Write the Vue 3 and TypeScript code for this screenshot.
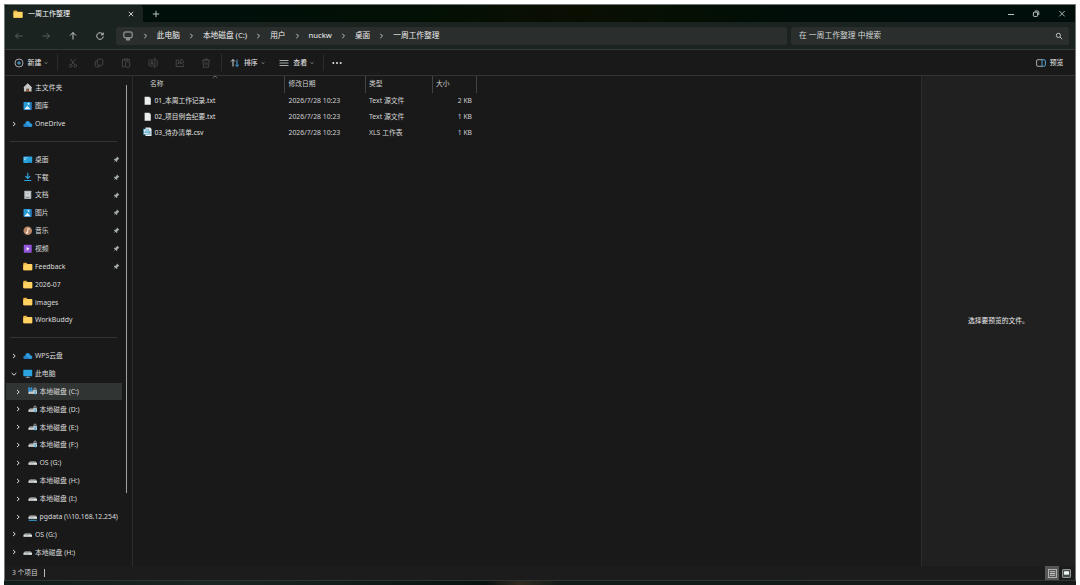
<script setup lang="ts">
interface NavItem {
  label?: string
  icon?: string
  chevron?: 'right' | 'down'
  pinned?: boolean
  nested?: boolean
  selected?: boolean
}

const crumbs: string[] = ['此电脑', '本地磁盘 (C:)', '用户', 'nuckw', '桌面', '一周工作整理']

const nav: NavItem[] = [
  { label: '主文件夹', icon: 'home' },
  { label: '图库', icon: 'gallery' },
  { label: 'OneDrive', icon: 'cloud', chevron: 'right' },
  {},
  { label: '桌面', icon: 'desktop', pinned: true },
  { label: '下载', icon: 'download', pinned: true },
  { label: '文档', icon: 'doc', pinned: true },
  { label: '图片', icon: 'gallery', pinned: true },
  { label: '音乐', icon: 'music', pinned: true },
  { label: '视频', icon: 'video', pinned: true },
  { label: 'Feedback', icon: 'folder', pinned: true },
  { label: '2026-07', icon: 'folder' },
  { label: 'images', icon: 'folder' },
  { label: 'WorkBuddy', icon: 'folder' },
  {},
  { label: 'WPS云盘', icon: 'cloud', chevron: 'right' },
  { label: '此电脑', icon: 'pc', chevron: 'down' },
  { label: '本地磁盘 (C:)', icon: 'sysdisk', chevron: 'right', nested: true, selected: true },
  { label: '本地磁盘 (D:)', icon: 'lockdisk', chevron: 'right', nested: true },
  { label: '本地磁盘 (E:)', icon: 'lockdisk', chevron: 'right', nested: true },
  { label: '本地磁盘 (F:)', icon: 'lockdisk', chevron: 'right', nested: true },
  { label: 'OS (G:)', icon: 'disk', chevron: 'right', nested: true },
  { label: '本地磁盘 (H:)', icon: 'disk', chevron: 'right', nested: true },
  { label: '本地磁盘 (I:)', icon: 'disk', chevron: 'right', nested: true },
  { label: 'pgdata (\\\\10.168.12.254)', icon: 'netdisk', chevron: 'right', nested: true },
  { label: 'OS (G:)', icon: 'disk', chevron: 'right' },
  { label: '本地磁盘 (H:)', icon: 'disk', chevron: 'right' },
]

const files = [
  { name: '01_本周工作记录.txt', date: '2026/7/28 10:23', type: 'Text 源文件', size: '2 KB', csv: false },
  { name: '02_项目例会纪要.txt', date: '2026/7/28 10:23', type: 'Text 源文件', size: '1 KB', csv: false },
  { name: '03_待办清单.csv', date: '2026/7/28 10:23', type: 'XLS 工作表', size: '1 KB', csv: true },
]
</script>

<template>
  <div class="screen">
    <div class="window">
      <header class="titlebar">
        <div class="tab">
          <svg class="i10" viewBox="0 0 10 10"><path d="M.5 1.5h3.200l1 1.200h4.800v6H.5z" fill="#e8a93a" /><path d="M.5 3h9v5.700h-9z" fill="#ffd466" /></svg>
          <span class="tab-title">一周工作整理</span>
          <svg class="tab-x" viewBox="0 0 6 6"><path d="M.8.8l4.400 4.400M5.200.8L.8 5.200" stroke="#ddd" stroke-width=".9" /></svg>
        </div>
        <svg class="plus" viewBox="0 0 8 8"><path d="M4 .8v6.400M.8 4h6.400" stroke="#ccd3cf" stroke-width=".9" /></svg>
        <div class="caption">
          <svg viewBox="0 0 8 8"><path d="M1 4.500h6" stroke="#d5dbd8" stroke-width=".9" /></svg>
          <svg viewBox="0 0 8 8" fill="none" stroke="#d5dbd8" stroke-width=".9"><rect x="1.400" y="2.200" width="4.200" height="4.200" rx=".8" /><path d="M2.800 1h2.700q1.300 0 1.300 1.300v2.600" /></svg>
          <svg viewBox="0 0 8 8"><path d="M1.300 1l5.400 5.400M6.700 1L1.300 6.400" stroke="#d5dbd8" stroke-width=".8" /></svg>
        </div>
      </header>

      <div class="addressbar">
        <div class="arrows">
          <svg class="dim" viewBox="0 0 10 10"><path d="M8.500 5h-7M4.500 2L1.500 5l3 3" /></svg>
          <svg class="dim" viewBox="0 0 10 10"><path d="M1.500 5h7M5.500 2l3 3-3 3" /></svg>
          <svg viewBox="0 0 10 10"><path d="M5 8.500v-7M2 4.500l3-3 3 3" /></svg>
          <svg viewBox="0 0 10 10"><path d="M7.900 3.400A3.300 3.300 0 1 0 8.300 5.500M8.200 1.600v2.200H5.900" /></svg>
        </div>
        <div class="path">
          <svg class="monitor" viewBox="0 0 10 10"><path d="M1.800 1h6.400q.9 0 .9.9v4q0 .9-.9.9H1.800q-.9 0-.9-.9v-4q0-.9.9-.9zM3 8.900h4M4 7v1.700M6 7v1.700" /></svg>
          <template v-for="c in crumbs" :key="c">
            <svg class="sep" viewBox="0 0 23 8"><path d="M10.300 1.800L12.500 4l-2.200 2.200" /></svg>
            <span>{{ c }}</span>
          </template>
        </div>
        <div class="search">
          <span>在 一周工作整理 中搜索</span>
          <svg viewBox="0 0 8 8"><circle cx="3.400" cy="3.400" r="2.100" /><path d="M5 5l2.200 2.200" /></svg>
        </div>
      </div>

      <div class="toolbar">
        <div class="tool new">
          <svg class="i10" viewBox="0 0 10 10" fill="none"><circle cx="5" cy="5" r="4" stroke="#c4ccd0" stroke-width=".8" /><path d="M5 3v4M3 5h4" stroke="#58b4e8" stroke-width=".9" /></svg>
          <span>新建</span>
          <svg class="caret" viewBox="0 0 4 4"><path d="M.5 1.300L2 2.700l1.500-1.400" /></svg>
        </div>
        <i class="bar"></i>
        <div class="disabled">
          <svg viewBox="0 0 10 10"><circle cx="2.700" cy="7.800" r="1.400" /><circle cx="7.300" cy="7.800" r="1.400" /><path d="M2.400.8l4.200 5.900M7.600.8L3.400 6.700" /></svg>
          <svg viewBox="0 0 10 10"><rect x="3.400" y="1.200" width="5.400" height="6" rx="1.200" /><path d="M3.300 3H2.200Q1.200 3 1.200 4v3.500q0 1.300 1.300 1.300H5q1 0 1-1.200" /></svg>
          <svg viewBox="0 0 10 10"><path d="M3.400 1.600H1.500v7.300h2.300M6.600 1.600h1.900v1.500M3.400.9h3.200v1.400H3.400z" /><rect x="4.500" y="3.800" width="4.200" height="5.400" rx=".7" /></svg>
          <svg viewBox="0 0 10 10"><path d="M5.600 2H2Q.8 2 .8 3.200v3.600Q.8 8 2 8h3.600M8 2q1.200 0 1.200 1.200v3.600Q9.200 8 8 8M6.800.7v8.600M5.900.7h1.800M5.900 9.300h1.800M2.300 6.800L3.900 3.200l1.500 3.600M2.800 5.700h2.100" /></svg>
          <svg viewBox="0 0 10 10"><path d="M4 2.200H1.200v6.400h7.400V6.500M6 1l3 2.500L6 6V4.500q-2 0-3 1.700Q3.200 3 6 2.500z" /></svg>
          <svg viewBox="0 0 10 10"><path d="M.9 2.200h8.200M3.700 2V.9h2.600V2M1.900 2.200l.6 7h5l.6-7M4.100 4.200v3M5.900 4.200v3" /></svg>
        </div>
        <i class="bar b2"></i>
        <div class="tool sort">
          <svg class="i10" viewBox="0 0 10 10" fill="none" stroke-width="1"><path d="M3 8.500V1.500M1 3.500l2-2 2 2" stroke="#cfd3d5" /><path d="M7 1.500v7M5.200 6.700L7 8.500l1.900-1.800" stroke="#4ba3df" /></svg>
          <span>排序</span>
          <svg class="caret" viewBox="0 0 4 4"><path d="M.5 1.300L2 2.700l1.500-1.400" /></svg>
        </div>
        <div class="tool view">
          <svg class="i10" viewBox="0 0 10 10"><path d="M.5 2.500h9M.5 5h9M.5 7.500h9" stroke="#b5bbbb" stroke-width=".9" /></svg>
          <span>查看</span>
          <svg class="caret" viewBox="0 0 4 4"><path d="M.5 1.300L2 2.700l1.500-1.400" /></svg>
        </div>
        <i class="bar b3"></i>
        <svg class="more" viewBox="0 0 10 4" fill="#e5e5e5"><circle cx="1.300" cy="2" r="1" /><circle cx="5" cy="2" r="1" /><circle cx="8.700" cy="2" r="1" /></svg>
        <div class="tool preview-btn">
          <svg class="i10" viewBox="0 0 10 10" fill="none" stroke-width=".9"><path d="M6 1.700H2Q.6 1.700.6 3v4Q.6 8.300 2 8.300h4" stroke="#b5bbbb" /><path d="M6 1.700h2q1.400 0 1.400 1.300v4q0 1.300-1.400 1.300H6z" stroke="#5aaee0" /></svg>
          <span>预览</span>
        </div>
      </div>

      <main class="content">
        <nav class="side">
          <div v-for="(n, k) in nav" :key="k" class="row" :class="{ nested: n.nested, selected: n.selected, rule: !n.label }">
            <template v-if="n.label">
              <span class="chev">
                <svg v-if="n.chevron === 'right'" viewBox="0 0 6 6"><path d="M2 .9L4.200 3 2 5.100" /></svg>
                <svg v-else-if="n.chevron" viewBox="0 0 6 6"><path d="M.7 2L3 4.200 5.300 2" /></svg>
              </span>
              <svg class="ico" viewBox="0 0 10 10">
                <template v-if="n.icon === 'home'"><path d="M1 9V4.500L5 .8l4 3.700V9H6.300V6H3.700v3z" fill="#c4c4c2" /><path d="M.7 4.900L5 .8l4.300 4.100" fill="none" stroke="#e4dfdb" stroke-width=".8" /><path d="M4 6.500h2V9H4z" fill="#b5683a" /></template>
                <template v-else-if="n.icon === 'gallery'"><rect x=".7" y="1" width="8.600" height="8.400" rx=".8" fill="#2b74b5" /><path d="M.7 1h7v8H.7z" fill="#259bd8" /><path d="M1.500 8.800L4.600 5l3.300 3.800z" fill="#e9f6fc" /><circle cx="5.800" cy="3" r="1" fill="#fff" /></template>
                <template v-else-if="n.icon === 'cloud'"><path d="M2.500 8.500C-.2 8.200 0 5 2.300 4.900 2.700 1.300 7 1 7.500 4.500 10.500 4.500 10.500 8.500 7.800 8.500z" fill="#2e9bdc" /><path d="M2.500 8.500C-.2 8.200 0 5 2.300 4.900L7.800 8.500z" fill="#247fc4" /></template>
                <template v-else-if="n.icon === 'desktop'"><rect x=".3" y="1.500" width="9.400" height="7" rx=".8" fill="#27a2dd" /><path d="M1.300 3h1.300M1.300 4.800h1.300M3.400 3h1.200" stroke="#d8f2ff" /><path d="M5.500 7.600h3" stroke="#1468a2" /></template>
                <template v-else-if="n.icon === 'download'"><path d="M5 .8v5.900M2.500 4.300L5 6.800l2.500-2.500M1.300 9h7.400" fill="none" stroke="#2fa5df" stroke-width="1.200" /></template>
                <template v-else-if="n.icon === 'doc'"><rect x="1.300" y=".7" width="7.400" height="8.700" rx=".7" fill="#b2b8bd" /><path d="M2.900 2.500h4.200v4H2.900z" fill="#eef0f0" /><path d="M3.500 3.600h3M3.500 5.200h3M3 8h3.500" stroke="#6d747a" stroke-width=".6" /></template>
                <template v-else-if="n.icon === 'music'"><circle cx="5" cy="5" r="4.500" fill="#b98765" /><path d="M5 7V2.500l2 1" fill="none" stroke="#f5ece5" /><circle cx="4.200" cy="7" r="1.100" fill="#f5ece5" /></template>
                <template v-else-if="n.icon === 'video'"><rect x=".8" y=".7" width="8.400" height="8.600" rx=".8" fill="#9558dc" /><path d="M3.900 3.200L6.800 5 3.900 6.800z" fill="#fff" /><path d="M8.300 1.500v7" stroke="#6934a5" stroke-width=".7" stroke-dasharray="1 1" /></template>
                <template v-else-if="n.icon === 'folder'"><path d="M.3 1.600q0-.7.7-.7h2.600l1.100 1.200H9q.7 0 .7.700V8q0 .7-.7.700H1Q.3 8.700.3 8z" fill="#e9b044" /><path d="M.3 2.700H4l.9-.6H9q.7 0 .7.700V8q0 .7-.7.700H1Q.3 8.700.3 8z" fill="#ffd262" /></template>
                <template v-else-if="n.icon === 'pc'"><rect x=".3" y=".9" width="9.400" height="6.800" rx=".6" fill="#2ba3df" /><path d="M5 7.500V9M2.700 9.200h4.600" stroke="#a6b0b6" stroke-width=".9" /></template>
                <template v-else>
                  <path d="M2 3.400h6l1.500 2.200h-9z" fill="#8d9291" /><path d="M.5 5h9v2.200h-9z" fill="#dfe3e2" /><path d="M2 6.200h4" stroke="#8a908f" stroke-width=".5" />
                  <template v-if="n.icon === 'sysdisk'"><path d="M.2.500h2v2h-2zM2.600.500h2v2h-2zM.2 2.900h2v1.800h-2zM2.600 2.900h2v1.800h-2z" fill="#2d9ce0" /></template>
                  <template v-if="n.icon === 'sysdisk' || n.icon === 'lockdisk'"><path d="M6.300 3V2.200q0-1.200 1.100-1.200t1.100 1.200V3" fill="none" stroke="#cfd6da" stroke-width=".7" /><path d="M5.700 3h3.600v3.300H5.700z" fill="#c5cfd4" /><path d="M7 4h1.200v4H7z" fill="#3c9fd4" /></template>
                  <path v-if="n.icon === 'netdisk'" d="M.7 8.700h8.600" stroke="#36a5d8" stroke-width="1.100" />
                </template>
              </svg>
              <span class="label">{{ n.label }}</span>
              <svg v-if="n.pinned" class="pin" viewBox="0 0 8 8"><path d="M4.700.7l2.600 2.600-.7.500-.5-.1-1.200 1.200.1 1.300-.8.700-1.500-1.500L.9 7.200l-.2-.2L2.300 5.200.9 3.800l.7-.7 1.400.1 1.200-1.200-.1-.6z" fill="#a7aeac" /></svg>
            </template>
          </div>
          <div class="scroll"></div>
        </nav>

        <section class="list">
          <div class="grid head">
            <span class="name">名称</span><span>修改日期</span><span>类型</span><span>大小</span>
            <svg class="order" viewBox="0 0 6 4"><path d="M.8 3L3 1l2.200 2" /></svg>
          </div>
          <div v-for="f in files" :key="f.name" class="grid file">
            <span class="name">
              <svg v-if="f.csv" class="fi" viewBox="0 0 10 10"><path d="M2.500.600h5l1.500 1.600v7.200H2.500z" fill="#e9eeee" /><rect x=".7" y="2.200" width="5.200" height="5.500" fill="#d7ebf5" stroke="#479dc1" stroke-width=".6" /><path d="M2.300 6.500V4.600M4.200 6.500V3.500M7.200 4v4" stroke="#247fae" stroke-width=".9" /></svg>
              <svg v-else class="fi" viewBox="0 0 10 10"><path d="M1.700.8h5l1.500 1.500v7H1.700z" fill="#eceeed" /><path d="M6.700.8v1.500h1.500" fill="#a6abab" /></svg>
              <b>{{ f.name }}</b>
            </span>
            <span>{{ f.date }}</span><span>{{ f.type }}</span><span class="size">{{ f.size }}</span>
          </div>
        </section>

        <aside class="preview">选择要预览的文件。</aside>
      </main>

      <footer class="status">
        <span>3 个项目</span><i></i>
        <div class="modes">
          <span class="mode on"><svg viewBox="0 0 10 10"><rect x=".6" y=".6" width="8.800" height="8.800" fill="#555" stroke="#bbb" /><path d="M2 3h6M2 5h6M2 7h6" stroke="#ddd" stroke-width=".9" /></svg></span>
          <span class="mode"><svg viewBox="0 0 10 10"><rect x=".6" y=".6" width="8.800" height="8.800" rx=".6" fill="#444b49" stroke="#a5aaa9" /><path d="M2.300 2.500h5.400v3.800H2.300z" fill="#f2fafa" /></svg></span>
        </div>
      </footer>
    </div>
    <div class="under"></div>
  </div>
</template>

<style>
html, body { margin: 0; background: #fff; overflow: hidden; }
</style>

<style scoped>
* { box-sizing: border-box; }
.screen {
  width: 1080px; height: 585px; padding: 4px 4px 0; background: #fff;
  font-family: "Noto Sans", "Noto Sans CJK SC", sans-serif; font-size: 6.85px; line-height: 1; color: #dcdcdc;
  display: flex; flex-direction: column; white-space: nowrap; overflow: hidden;
}
svg { display: block; flex: none; }
.window { height: 577px; border: 1px solid #747877; border-bottom: 1px solid #303432; background: #191919; display: flex; flex-direction: column; }
.under { height: 4px; background: linear-gradient(90deg, #101c19, #1b2524 20%, #0a1211 45%, #302a20 48%, #111b18 52%, #161b1a); }
.i10 { width: 10px; height: 10px; }

.titlebar { height: 17px; flex: none; display: flex; align-items: center; background: linear-gradient(90deg, #020f0b, #000f09 22%, #031004 40%, #0b0e02 52%, #041003 64%, #000d09 75%, #000e0c); }
.tab { width: 138px; height: 17px; padding-left: 8px; display: flex; align-items: center; background: #1b2321; border-radius: 4px 4px 0 0; }
.tab-title { margin-left: 5px; width: 99px; font-size: 7px; color: #fff; }
.tab-x { width: 6px; height: 6px; margin-left: 1px; }
.plus { width: 8px; height: 8px; margin-left: 8.500px; }
.caption { margin-left: auto; display: flex; gap: 17.500px; padding-right: 9.500px; }
.caption svg { width: 8px; height: 8px; }

.addressbar { height: 28px; flex: none; display: flex; align-items: center; background: #1b2321; border-bottom: 1px solid #343837; font-size: 7.700px; color: #eee; }
.arrows { width: 111px; padding-left: 9px; display: flex; gap: 16.900px; }
.arrows svg { width: 10px; height: 10px; fill: none; stroke: #d2d8d5; stroke-width: .9; }
.arrows .dim { stroke: #5d6663; }
.path { width: 671px; height: 18px; border-radius: 2.500px; background: #2a2e2d; display: flex; align-items: center; padding-left: 7px; }
.path span { padding-top: 1px; }
.monitor { width: 10px; height: 10px; margin-right: .8px; fill: none; stroke: #bcc5c1; stroke-width: .9; }
.sep { width: 23px; height: 8px; fill: none; stroke: #d4d8d6; stroke-width: .9; }
.search { width: 278px; height: 18px; margin-left: 4px; padding: 0 6.500px 0 8px; border-radius: 2.500px; background: #2a2e2d; display: flex; align-items: center; justify-content: space-between; color: #d3d7d5; font-size: 7.800px; }
.search span { padding-top: 1px; }
.search svg { width: 8px; height: 8px; fill: none; stroke: #ccd1cf; stroke-width: .9; }

.toolbar { height: 26px; flex: none; display: flex; align-items: center; border-bottom: 1px solid #303433; color: #eee; font-size: 6.900px; }
.tool { display: flex; align-items: center; }
.tool span { margin-left: 4px; padding-top: 1px; }
.caret { width: 4px; height: 4px; margin-left: 3px; fill: none; stroke: #9b9f9e; stroke-width: .7; }
.new { width: 52px; padding-left: 8.500px; }
.bar { width: 1px; height: 17px; background: #2b2d2d; }
.disabled { display: flex; gap: 16.800px; margin-left: 9.500px; }
.disabled svg { width: 10px; height: 10px; fill: none; stroke: #4d504f; stroke-width: .8; }
.b2 { margin-left: 9.500px; }
.sort { margin-left: 8px; }
.view { margin-left: 14.500px; }
.b3 { margin-left: 9px; }
.more { width: 10px; height: 4px; margin-left: 8px; }
.preview-btn { margin-left: auto; padding-right: 11.500px; }

.content { height: 490px; flex: none; display: flex; }
.side { position: relative; width: 128px; padding-top: 3px; border-right: 1px solid #2c2c2c; overflow: hidden; flex: none; }
.row { height: 17.865px; display: flex; align-items: center; width: 116px; margin-left: 1px; }
.row.nested { padding-left: 4.500px; }
.row.selected { background: #303534; }
.row.rule::before { content: ""; width: 107px; height: 1px; margin-left: 4px; background: #343434; }
.chev { width: 17px; padding-left: 4.500px; }
.chev svg { width: 6px; height: 6px; fill: none; stroke: #dedede; stroke-width: 1; }
.ico { width: 9.500px; height: 9.500px; }
.label { margin-left: 2.500px; padding-top: 1.500px; }
.pin { width: 7px; height: 7px; margin-left: auto; margin-right: 2px; }
.scroll { position: absolute; left: 121px; top: 9px; width: 1px; height: 408px; background: #a0a2a1; }

.list { flex: 1; }
.grid { display: grid; grid-template-columns: 152px 80.500px 67px 44.500px; align-items: center; position: relative; }
.head { height: 17px; margin-bottom: 0; color: #cecece; font-size: 6.750px; }
.head span { height: 17px; border-right: 1px solid #414444; display: flex; align-items: center; padding-left: 3.500px; padding-bottom: 1px; }
.head .name { padding-left: 17px; }
.order { position: absolute; left: 79px; top: -1px; width: 6px; height: 4px; fill: none; stroke: #8d8d8d; stroke-width: .7; }
.file { height: 15.700px; color: #d2d2d2; }
.file span { padding: 1.500px 0 0 3.500px; }
.file .name { display: flex; align-items: center; gap: 2.500px; padding: 0 0 0 9.500px; color: #e0e0e0; }
.file b { font-weight: 400; font-size: 6.700px; padding-top: 1.500px; }
.file .size { text-align: right; padding: 1.500px 5px 0 0; font-size: 6.750px; }
.fi { width: 9.500px; height: 9.500px; }
.preview { width: 154px; border-left: 1px solid #2c2c2c; background: #202020; display: flex; align-items: center; justify-content: center; color: #eee; font-size: 6.750px; }

.status { height: 14px; flex: none; background: #1c1c1c; display: flex; align-items: center; padding-left: 7px; color: #cfcfcf; font-size: 6.750px; }
.status > span { padding-top: 1px; }
.status > i { width: 1px; height: 8px; background: #bbb; margin-left: 6px; }
.modes { margin-left: auto; display: flex; padding-right: 2px; }
.mode { width: 14px; height: 14px; display: flex; align-items: center; justify-content: center; }
.mode.on { background: #555756; }
.mode svg { width: 9px; height: 9px; }
</style>
